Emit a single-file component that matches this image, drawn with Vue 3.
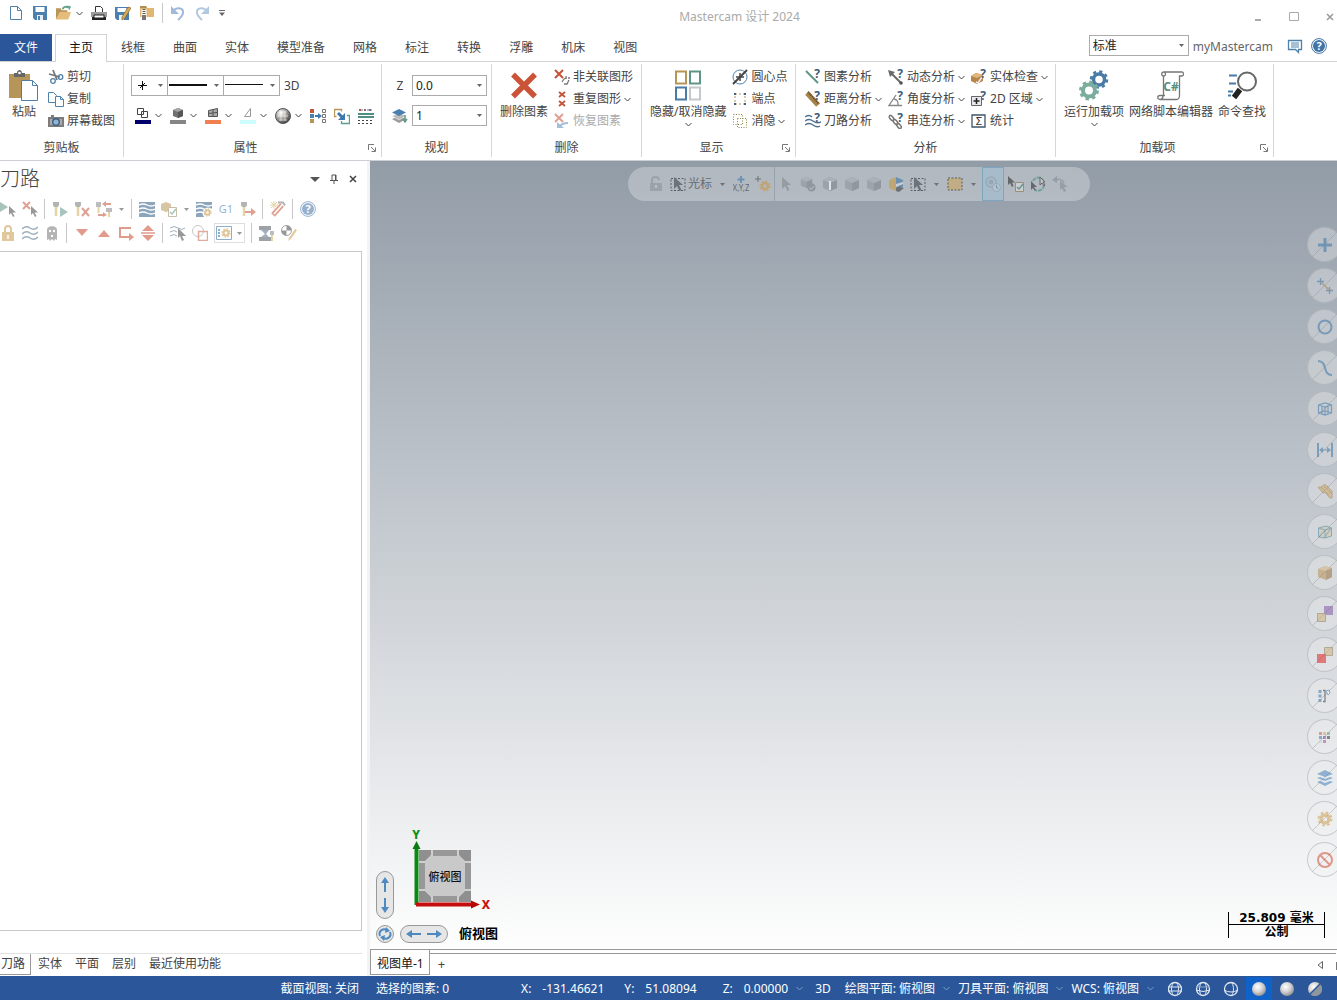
<template>
  <div class="app">
    <svg class="sprite" width="0" height="0" aria-hidden="true">
      <defs>
        <radialGradient id="g-ball" cx=".4" cy=".35" r=".7">
          <stop offset="0" stop-color="#fff" /><stop offset=".5" stop-color="#d4d4d4" /><stop offset="1" stop-color="#8c8c8c" />
        </radialGradient>
        <radialGradient id="g-metal" cx=".35" cy=".3" r=".75">
          <stop offset="0" stop-color="#fff" /><stop offset=".5" stop-color="#a8a4a0" /><stop offset="1" stop-color="#3c3a38" />
        </radialGradient>
      </defs>

      <!-- shared pieces -->
      <symbol id="chev" viewBox="0 0 7 5"><path d="M.5 1l3 3 3-3" fill="none" stroke="currentColor" /></symbol>
      <symbol id="tri" viewBox="0 0 7 5"><path d="M1 1h5L3.500 4z" fill="currentColor" /></symbol>
      <symbol id="launch" viewBox="0 0 8 8"><path d="M.5 6V.5H6M3 3l4 4M7.500 3.500v4h-4" fill="none" stroke="#777" /></symbol>
      <symbol id="cursor" viewBox="0 0 16 16"><path d="M4 1v12l3-3 2.500 5 2-1-2.500-5h4z" fill="#3f444b" /></symbol>

      <!-- quick access -->
      <symbol id="new" viewBox="0 0 16 16"><path d="M2.500 1.500h7l4 4v9h-11zM9.500 1.500v4h4" fill="#fff" stroke="#4e82ab" /></symbol>
      <symbol id="save" viewBox="0 0 16 16"><path d="M1 1h14v14H3l-2-2z" fill="#4a7fb0" /><path d="M3.500 2h9v5h-9z" fill="#fff" /><path d="M5 10h6v5H5z" fill="#e8eef4" /><path d="M6 11h2v4H6z" fill="#4a7fb0" /></symbol>
      <symbol id="open" viewBox="0 0 17 16"><path d="M0 3h5l1 2h6v3H4L0 15z" fill="#b89659" /><path d="M4 7h12l-3 8H0z" fill="#e5bd7b" /><path d="M7 4c1-3 4-3 6-2" fill="none" stroke="#62a28c" stroke-width="2" /><path d="M12 0l4 1-2 4z" fill="#62a28c" /></symbol>
      <symbol id="print" viewBox="0 0 16 16"><path d="M4.500 7V1.500h5l2 2V7" fill="#fff" stroke="#333" /><path d="M0 7h16v5H0z" fill="#9b9b9b" /><path d="M1 12h14v3H1z" fill="#222" /><path d="M3 10h10v3H3z" fill="#fff" stroke="#222" /></symbol>
      <symbol id="saveas" viewBox="0 0 16 16"><path d="M0 2h14v13H2l-2-2z" fill="#4a7fb0" /><path d="M2.500 3h9v4h-9z" fill="#fff" /><path d="M4 10h5v5H4z" fill="#e8eef4" /><path d="M7 12l6-10 3 1-6 10-3 2z" fill="#d8a94f" stroke="#7a5b2d" stroke-width=".6" /></symbol>
      <symbol id="zip" viewBox="0 0 16 16"><path d="M1 1h6l1 2h7v9H1z" fill="#e0b673" /><path d="M1 1h6l1 2H1z" fill="#b08d50" /><path d="M5 4v11" stroke="#fff" stroke-width="5" /><path d="M5 4v11" stroke="#555" stroke-width="3" stroke-dasharray="1 1" /><path d="M3 10h4v5H3z" fill="#777" /></symbol>
      <symbol id="undo" viewBox="0 0 16 16"><path d="M4 5c3-3 8-2 9 1 1 4-2 6-5 9" fill="none" stroke="#9fbbd9" stroke-width="2" /><path d="M1 1v8h8z" fill="#9fbbd9" /></symbol>
      <symbol id="redo" viewBox="0 0 16 16"><path d="M12 5C9 2 4 3 3 6c-1 4 2 6 5 9" fill="none" stroke="#b3c9e0" stroke-width="2" /><path d="M15 1v8H7z" fill="#b3c9e0" /></symbol>
      <symbol id="qat" viewBox="0 0 8 8"><path d="M1 1.500h6" stroke="#666" /><path d="M1 3.500h6L4 7z" fill="#666" /></symbol>
      <symbol id="min" viewBox="0 0 10 10"><path d="M2 8h6" stroke="#aaa" stroke-width="2" /></symbol>
      <symbol id="max" viewBox="0 0 10 10"><path d="M.5.5h9v8h-9z" fill="none" stroke="#aaa" /></symbol>
      <symbol id="close" viewBox="0 0 10 10"><path d="M2 2l6 6M8 2L2 8" stroke="#999" stroke-width="1.500" /></symbol>
      <symbol id="chat" viewBox="0 0 16 16"><path d="M1.500 2.500h13v9h-3v3l-3-3h-7z" fill="#fff" stroke="#4e82ab" stroke-width="1.300" /><path d="M4 5h8M4 7h8M4 9h8" stroke="#4e82ab" /></symbol>
      <symbol id="help" viewBox="0 0 16 16"><circle cx="8" cy="8" r="7.400" fill="#fff" stroke="#4173a6" /><circle cx="8" cy="8" r="6" fill="#4173a6" /></symbol>

      <!-- clipboard -->
      <symbol id="paste" viewBox="0 0 30 33"><path d="M0 5h21v24H0z" fill="#b69559" /><path d="M5 4h3c0-4 5-4 5 0h3v4H5z" fill="#666" /><circle cx="10.500" cy="4" r="1.300" fill="#fff" /><path d="M12.500 11.500h11l5 5v15h-16z" fill="#fff" stroke="#4e7ea6" /><path d="M23.500 11.500v5h5" fill="none" stroke="#4e7ea6" /></symbol>
      <symbol id="cut" viewBox="0 0 16 16"><path d="M5 1l4 10M1 5l11 3" stroke="#777" stroke-width="1.800" /><circle cx="5" cy="12" r="2.300" fill="none" stroke="#4e82ab" stroke-width="1.300" /><circle cx="12.500" cy="8" r="2.300" fill="none" stroke="#4e82ab" stroke-width="1.300" /></symbol>
      <symbol id="copy" viewBox="0 0 16 16"><path d="M.5 1.500h5l3 3v7h-8z" fill="#fff" stroke="#4e82ab" /><path d="M7.500 5.500h5l3 3v7h-8zM12.500 5.500v3h3" fill="#fff" stroke="#4e82ab" /></symbol>
      <symbol id="camera" viewBox="0 0 16 16"><path d="M0 4h3V2h3v2h10v10H0z" fill="#7d7d7d" /><path d="M2 6h12v6H2z" fill="#aaa" /><circle cx="8" cy="9" r="4" fill="#3f5f7c" /><circle cx="8" cy="9" r="2.600" fill="#8db5da" /></symbol>

      <!-- attributes -->
      <symbol id="c-wire" viewBox="0 0 16 18"><path d="M2.500 1.500h6v6h-6zM6.500 4.500h6v6h-6z" fill="none" stroke="#444" /><path d="M0 13h16v4H0z" fill="#00006b" /></symbol>
      <symbol id="c-solid" viewBox="0 0 16 18"><path d="M8 1l5 2v6l-5 2-5-2V3z" fill="#707070" /><path d="M8 1l5 2-5 2-5-2z" fill="#a5a5a5" /><path d="M8 5l5-2v6l-5 2z" fill="#555" /><path d="M0 13h16v4H0z" fill="#858585" /></symbol>
      <symbol id="c-surf" viewBox="0 0 16 18"><path d="M3.500 3.500l9-2v8h-9zM8 2v8M3 6.500l9-1" fill="#aaa" stroke="#555" /><path d="M0 13h16v4H0z" fill="#f08050" /></symbol>
      <symbol id="c-mesh" viewBox="0 0 16 18"><path d="M10.500 1.500v8h-6z" fill="#fff" stroke="#999" /><path d="M0 13h16v4H0z" fill="#cdfcfc" /></symbol>
      <symbol id="metal" viewBox="0 0 16 18"><circle cx="8" cy="9" r="7.500" fill="url(#g-metal)" stroke="#555" /><path d="M5 5h6M3 9h10M4 13h8M6 4v10M10 4v10" stroke="#fff" opacity=".6" /></symbol>
      <symbol id="attr" viewBox="0 0 16 18"><path d="M0 2h4v4H0z" fill="#c5533a" /><path d="M0 7h4v4H0z" fill="#4a7fb0" /><path d="M0 12h4v4H0z" fill="#b69559" /><path d="M5 9h4" stroke="#3f78ad" stroke-width="2" /><path d="M8 6l4 3-4 3z" fill="#3f78ad" /><path d="M12.500 2.500h3v3h-3zM12.500 7.500h3v3h-3zM12.500 12.500h3v3h-3z" fill="none" stroke="#777" /></symbol>
      <symbol id="attr2" viewBox="0 0 16 18"><path d="M2.500 9.500h-2v-7h7v2" fill="none" stroke="#b69559" stroke-width="1.300" /><path d="M4 6l4 4" stroke="#3f78ad" stroke-width="3" /><path d="M11 6v7H4z" fill="#3f78ad" /><path d="M13 8.500h2.500v8h-8V14" fill="none" stroke="#5d9c93" stroke-width="1.300" /></symbol>
      <symbol id="lines" viewBox="0 0 16 18"><path d="M1 3h14" stroke="#c5533a" stroke-width="2" stroke-dasharray="2 3" /><path d="M3 3h12" stroke="#4a7fb0" stroke-dasharray="2 1" /><path d="M0 7h16M0 10h16" stroke="#4f8f86" stroke-width="2" /><path d="M0 13.500h16M0 16.500h16" stroke="#444" stroke-dasharray="2 2" /></symbol>
      <symbol id="layers" viewBox="0 0 16 16"><path d="M0 11l7-3 7 3-7 4z" fill="#999" /><path d="M0 8l7-3 7 3-7 4z" fill="#bbb" stroke="#fff" stroke-width=".5" /><path d="M0 4.500L7 1l7 3.500L7 8z" fill="#4a7fb0" /><path d="M13 7v6M11 11l2 3 2-3" fill="none" stroke="#5d9c83" stroke-width="1.500" /></symbol>

      <!-- delete -->
      <symbol id="del" viewBox="0 0 30 32"><path d="M4 5l22 22M26 5L4 27" stroke="#ca5338" stroke-width="5.500" /></symbol>
      <symbol id="del1" viewBox="0 0 16 16"><path d="M1 1l8 8M9 1L1 9" stroke="#c5533a" stroke-width="2" /><path d="M8 13l2-3 3-1M10 15l3 0 2-4M12 7v2M14 9h2" fill="none" stroke="#777" stroke-width="1.300" /></symbol>
      <symbol id="del2" viewBox="0 0 16 16"><path d="M5 1l6 5M11 1L5 6M5 10l6 5M11 10l-6 5" stroke="#c5533a" stroke-width="1.800" /></symbol>
      <symbol id="del3" viewBox="0 0 16 16"><path d="M1 1l8 8M9 1L1 9" stroke="#dfa093" stroke-width="2" /><path d="M14 10c-3 0-6 0-8 3" fill="none" stroke="#a3bfdb" stroke-width="2" /><path d="M3 9v6h7z" fill="#a3bfdb" /></symbol>

      <!-- display -->
      <symbol id="hide" viewBox="0 0 30 32"><g fill="#fff" stroke-width="2"><path d="M3 2h10v12H3z" stroke="#b69559" /><path d="M17 2h10v12H17z" stroke="#5f9585" /><path d="M3 18h10v12H3z" stroke="#4a7ba6" /><path d="M17 18h10v12H17z" stroke="#c5c8cb" /></g></symbol>
      <symbol id="center" viewBox="0 0 16 16"><circle cx="8" cy="8" r="7" fill="none" stroke="#4e82ab" /><path d="M8 4v8M4 8h8" stroke="#444" stroke-width="1.500" /><path d="M1 15L15 1" stroke="#444" stroke-width="2" /></symbol>
      <symbol id="ends" viewBox="0 0 16 16"><path d="M3 3h10v10H3z" fill="none" stroke="#b69559" stroke-dasharray="2 2" /><path d="M2 2h2v2H2zM12 2h2v2h-2zM2 12h2v2H2zM12 12h2v2h-2z" fill="#3f5f8c" /></symbol>
      <symbol id="blank" viewBox="0 0 16 16"><path d="M1.500 1.500h9v10h-9zM5.500 5.500h9v9h-9z" fill="none" stroke="#8d8748" stroke-dasharray="1 1.500" /></symbol>

      <!-- analyze -->
      <symbol id="an1" viewBox="0 0 16 16"><path d="M1 2l12 12" stroke="#5f9585" stroke-width="2" /></symbol>
      <symbol id="an2" viewBox="0 0 16 16"><path d="M2 2l11 12" stroke="#a8834a" stroke-width="5" /><path d="M3 1l11 12" stroke="#5b4526" stroke-dasharray="1 1" stroke-width="2" /></symbol>
      <symbol id="an3" viewBox="0 0 16 16"><path d="M0 4q4-3 7 0M0 8q4-3 8 0t8 1M0 12q4-3 8 0t7 1" fill="none" stroke="#4e6f8f" stroke-width="1.400" /></symbol>
      <symbol id="an4" viewBox="0 0 16 16"><path d="M3 4l10 10" stroke="#6a6a6a" stroke-width="2" /><path d="M0 1l7 2-5 5z" fill="#6a6a6a" /><circle cx="13" cy="14" r="1.800" fill="#555" /></symbol>
      <symbol id="an5" viewBox="0 0 16 16"><path d="M8 4L1 14.500h13M6 8c4 1 4 3 4 6" fill="none" stroke="#888" stroke-width="1.300" /></symbol>
      <symbol id="an6" viewBox="0 0 16 16"><g fill="none" stroke="#777" stroke-width="1.500"><ellipse cx="3.500" cy="5" rx="3" ry="1.600" transform="rotate(50 3.500 5)" /><ellipse cx="7.500" cy="9" rx="3" ry="1.600" transform="rotate(50 7.500 9)" /><ellipse cx="11" cy="13" rx="3" ry="1.600" transform="rotate(50 11 13)" /></g></symbol>
      <symbol id="an7" viewBox="0 0 16 16"><path d="M0 7l5-3 7 2v6l-6 3-6-3z" fill="#b8854a" /><path d="M0 7l5-3 7 2-6 3z" fill="#dfb67c" /><path d="M5 13l2 1 4-6" fill="none" stroke="#eee" stroke-width="1.500" /></symbol>
      <symbol id="an8" viewBox="0 0 16 16"><path d="M.5 5.500h10v9H.5z" fill="#e8e8ee" stroke="#666" /><path d="M5.500 7v6M2.500 10h6" stroke="#222" stroke-width="1.500" /></symbol>
      <symbol id="an9" viewBox="0 0 16 16"><path d="M1 2h13v12H1z" fill="#fff" stroke="#3f5468" stroke-width="1.300" /></symbol>

      <!-- add-ins -->
      <symbol id="gears" viewBox="0 0 30 32"><circle cx="20" cy="10" r="5.500" fill="none" stroke="#4a7ba6" stroke-width="3.500" /><circle cx="20" cy="10" r="8" fill="none" stroke="#4a7ba6" stroke-width="2.500" stroke-dasharray="3.140 3.140" /><circle cx="10" cy="21" r="6" fill="#fff" stroke="#7bad9f" stroke-width="4" /><circle cx="10" cy="21" r="8.500" fill="none" stroke="#7bad9f" stroke-width="3" stroke-dasharray="3.340 3.340" /></symbol>
      <symbol id="csharp" viewBox="0 0 30 32"><path d="M8 2.500h18c2 0 2 4 0 4h-2.500V26c0 4-3 4-3 4H4c-3 0-3-4 0-4h3.500V6.500C5 6.500 5 2.500 8 2.500c2 0 2 4 0 4M4 30c3 0 3-4 3-4h2" fill="none" stroke="#777" stroke-width="1.300" /></symbol>
      <symbol id="find" viewBox="0 0 30 32"><circle cx="20" cy="12" r="9" fill="#fff" stroke="#666" stroke-width="2" /><path d="M13 20l-6 8" stroke="#222" stroke-width="5.500" /><path d="M2 6h8M2 14h7M1 22h5M1 26h3" stroke="#4a7ba6" stroke-width="2" /></symbol>

      <!-- panel -->
      <symbol id="pin" viewBox="0 0 10 10"><path d="M3 1h4v5M3 1v5M1 6.500h8M5 6v4M6.500 1v5" fill="none" stroke="#555" /></symbol>
      <symbol id="p-close" viewBox="0 0 10 10"><path d="M2 2l6 6M8 2L2 8" stroke="#444" stroke-width="1.500" /></symbol>
      <symbol id="p-down" viewBox="0 0 10 10"><path d="M0 3h10L5 8z" fill="#555" /></symbol>
      <symbol id="p1" viewBox="0 0 16 16"><path d="M0 1l8 5-8 5z" fill="#5f9585" /><path d="M9 5v9l2-2 2 4 1.500-1-2-3.500H16z" fill="#444" /></symbol>
      <symbol id="p2" viewBox="0 0 16 16"><path d="M1 1l7 7M8 1L1 8" stroke="#c5533a" stroke-width="2" /><path d="M9 5v9l2-2 2 4 1.500-1-2-3.500H16z" fill="#444" /></symbol>
      <symbol id="tool" viewBox="0 0 16 16"><path d="M1 1h6v3l-1 2H2L1 4z" fill="#777" /><path d="M4 6v9" stroke="#d1b25c" stroke-width="2.500" /></symbol>
      <symbol id="p3" viewBox="0 0 16 16"><use href="#tool" /><path d="M8 6l8 5-8 5z" fill="#5f9585" /></symbol>
      <symbol id="p4" viewBox="0 0 16 16"><use href="#tool" /><path d="M8 7l7 8M15 7l-7 8" stroke="#c5533a" stroke-width="2" /></symbol>
      <symbol id="p5" viewBox="0 0 16 16"><path d="M0 1h5v5H0zM10 7h6v4h-6z" fill="#888" /><path d="M2.500 6v6M13 11v5" stroke="#d1b25c" stroke-width="2" /><path d="M15 3H8M2 14h6" stroke="#c5533a" stroke-width="2" /><path d="M6 3l4-3v6zM11 14l-4-3v5z" fill="#c5533a" /></symbol>
      <symbol id="p6" viewBox="0 0 16 16"><path d="M0 1h16v15H0z" fill="#2f5d84" /><path d="M0 4q4-2 8 0t8 0M0 8q4-2 8 0t8 0M0 12q4-2 8 0t8 0" fill="none" stroke="#fff" stroke-width="1.300" /></symbol>
      <symbol id="p7" viewBox="0 0 16 16"><path d="M0 3l5-2 5 2v6l-5 2-5-2z" fill="#b89659" /><path d="M7.500 6.500h8v9h-8z" fill="#fff" stroke="#9a8a5a" /><path d="M9 11l2 2 4-5" fill="none" stroke="#5f9585" stroke-width="1.500" /></symbol>
      <symbol id="gear" viewBox="0 0 16 16"><circle cx="8" cy="8" r="4" fill="none" stroke="#c89746" stroke-width="3.500" /><circle cx="8" cy="8" r="6.500" fill="none" stroke="#c89746" stroke-width="2" stroke-dasharray="2.550 2.550" /></symbol>
      <symbol id="p8" viewBox="0 0 16 16"><use href="#p6" /><circle cx="12" cy="12" r="5.500" fill="#fff" /><use href="#gear" x="7" y="7" width="9" height="9" /></symbol>
      <symbol id="p10" viewBox="0 0 16 16"><use href="#tool" /><path d="M5 11h7" stroke="#c5533a" stroke-width="2" /><path d="M11 7l5 4-5 4z" fill="#c5533a" /></symbol>
      <symbol id="p11" viewBox="0 0 16 16"><path d="M3 14l9-10" stroke="#c5533a" stroke-width="5" /><path d="M4 13l8-9" stroke="#fff" stroke-width="1.500" /><path d="M4 0v8M0 4h8M1 1l6 6M7 1L1 7" stroke="#d1b25c" /><path d="M8 1.500h5l2 3" fill="none" stroke="#777" stroke-width="2" /></symbol>
      <symbol id="r1" viewBox="0 0 16 16"><path d="M2 7h12v9H2z" fill="#c89b4e" /><path d="M5 8V4c0-4 6-4 6 0v4" fill="none" stroke="#c89b4e" stroke-width="2" /><path d="M8 10v4" stroke="#fff" stroke-width="1.500" /></symbol>
      <symbol id="r2" viewBox="0 0 16 16"><path d="M0 4q4-4 8-1t8-1M0 9q4-4 8-1t8-1M0 14q4-4 8-1t8-1" fill="none" stroke="#4e6f8f" stroke-width="1.500" /></symbol>
      <symbol id="r3" viewBox="0 0 16 16"><path d="M3 15V5c0-5 10-5 10 0v10l-2-1-1 2-2-2-2 2-1-2z" fill="#777" /><circle cx="6" cy="6" r="1.200" fill="#fff" /><circle cx="10" cy="6" r="1.200" fill="#fff" /><path d="M7 10h2v2H7z" fill="#fff" /></symbol>
      <symbol id="r4" viewBox="0 0 16 16"><path d="M2 4h12l-6 7z" fill="#ca4a30" /></symbol>
      <symbol id="r5" viewBox="0 0 16 16"><path d="M2 12h12L8 5z" fill="#ca4a30" /></symbol>
      <symbol id="r6" viewBox="0 0 16 16"><path d="M13 3H2v9h10" fill="none" stroke="#ca4a30" stroke-width="2" /><path d="M11 8l5 4-5 4z" fill="#ca4a30" /></symbol>
      <symbol id="r7" viewBox="0 0 16 16"><path d="M2 6h12L8 0zM2 10h12l-6 6z" fill="#ca4a30" /><path d="M1 8h14" stroke="#ca4a30" stroke-width="1.500" /></symbol>
      <symbol id="r8" viewBox="0 0 16 16"><path d="M0 3q4-3 8 0t7 0M0 7q4-3 7 0M0 11q4-3 7 0" fill="none" stroke="#4e6f8f" /><path d="M8 3v10l2-2 2 5 2-1-2-4h4z" fill="#444" /></symbol>
      <symbol id="r9" viewBox="0 0 16 16"><circle cx="6" cy="6" r="5.500" fill="none" stroke="#999" /><path d="M6.500 6.500h9v9h-9z" fill="none" stroke="#ca6a50" stroke-width="1.500" /></symbol>
      <symbol id="r10" viewBox="0 0 16 16"><path d="M.5 1.500h15v13H.5z" fill="#fff" stroke="#2f6ea5" /><path d="M3 4v2M3 7v2M3 10v2" stroke="#2f6ea5" stroke-width="2" /><use href="#gear" x="5" y="3" width="10" height="10" /></symbol>
      <symbol id="r11" viewBox="0 0 16 16"><path d="M0 1h12v4H0zM0 12h12v4H0z" fill="#4f565d" /><path d="M2 5l4 4-4 3h8L7 9l3-4z" fill="#54718e" /><path d="M11 6h4v4h-4z" fill="#888" /><path d="M13 10v6" stroke="#d1b25c" stroke-width="2" /></symbol>
      <symbol id="r12" viewBox="0 0 16 16"><circle cx="5.500" cy="5.500" r="5" fill="#fff" stroke="#555" /><path d="M5.500.5v10a5 5 0 0 1-5-5h10a5 5 0 0 0-5-5z" fill="#444" /><path d="M8 13l6-9 2 1-6 9-3 2z" fill="#cfa14e" /></symbol>

      <!-- selection bar -->
      <symbol id="s-lock" viewBox="0 0 16 16"><path d="M2 7h12v8H2z" fill="#8d949b" /><path d="M4 7V4c0-4 7-4 7 0" fill="none" stroke="#8d949b" stroke-width="2" /><path d="M8 9v3" stroke="#c4c9cf" stroke-width="2" /></symbol>
      <symbol id="s-sel" viewBox="0 0 16 16"><path d="M1 2.500h14v12H1z" fill="none" stroke="#222" stroke-dasharray="2 1.500" /><use href="#cursor" /></symbol>
      <symbol id="s-xyz" viewBox="0 0 16 16"><path d="M8 0v7M4.500 3.500h7" stroke="#3f78ad" stroke-width="2" /></symbol>
      <symbol id="s-gear" viewBox="0 0 16 16"><path d="M3 0v6M0 3h6" stroke="#444" /><use href="#gear" x="4" y="4" width="12" height="12" /></symbol>
      <symbol id="s-arrow" viewBox="0 0 16 16"><path d="M4 1v12l3-3 2.500 5 2-1-2.500-5h4z" fill="#82898f" /></symbol>
      <symbol id="s-cube" viewBox="0 0 16 16"><path d="M8 1l7 3v8l-7 3-7-3V4z" fill="#8f969d" /><path d="M8 7l7-3v8l-7 3z" fill="#7b8289" /><path d="M8 1l7 3-7 3-7-3z" fill="#a6acb2" /></symbol>
      <symbol id="s-cubecheck" viewBox="0 0 16 16"><use href="#s-cube" width="13" height="13" /><circle cx="11.500" cy="11.500" r="4" fill="#7b8289" /><path d="M9.500 11.500l1.500 2 3-3.500" fill="none" stroke="#c4c9cf" /></symbol>
      <symbol id="s-cubebar" viewBox="0 0 16 16"><use href="#s-cube" /><path d="M8 5v9" stroke="#fff" stroke-width="2" /></symbol>
      <symbol id="s-cubecolor" viewBox="0 0 16 16"><path d="M8 1v14l-7-3V4z" fill="#c99a3e" /><path d="M8 1l7 3v8l-7 3z" fill="#3d75a8" /><path d="M8 8l7-2v2l-7 3z" fill="#ddd" /><path d="M8 12l5-2v2h3l-5 4-3-1z" fill="#444" /></symbol>
      <symbol id="s-area" viewBox="0 0 16 16"><path d="M1 2h14v12H1z" fill="#caa65c" stroke="#222" stroke-dasharray="2 1.500" /></symbol>
      <symbol id="s-clock" viewBox="0 0 16 16"><circle cx="6" cy="6" r="5" fill="none" stroke="#8e9eaa" stroke-width="1.500" /><circle cx="6" cy="6" r="2.500" fill="#8e9eaa" /><circle cx="11.500" cy="11.500" r="4" fill="#b8cbd6" stroke="#8e9eaa" /><path d="M11.500 9v3h2" fill="none" stroke="#687884" /></symbol>
      <symbol id="s-task" viewBox="0 0 16 16"><path d="M0 0v9l2-2 2 4 1.500-1L4 6.500h3z" fill="#333" /><path d="M7.500 6.500h8v9h-8z" fill="#ddd" stroke="#8a7441" /><path d="M9 11l2 2 4-5" fill="none" stroke="#387a6b" stroke-width="1.500" /></symbol>
      <symbol id="s-cycle" viewBox="0 0 16 16"><path d="M3 5c3-5 8-4 10-1M14 9c0 5-6 7-9 5" fill="none" stroke="#4f8f86" stroke-width="2" stroke-dasharray="4 1" /><path d="M1 5v9l2-2 2 3 1-1-2-3h3z" fill="#333" /><path d="M10 1v8l2-2 2 3 1-1-2-3h2z" fill="#ccc" stroke="#333" /></symbol>
      <symbol id="s-back" viewBox="0 0 16 16"><path d="M2 4c5-2 9 0 10 3" fill="none" stroke="#858c93" stroke-width="1.500" /><path d="M0 4l5-4v7z" fill="#858c93" /><path d="M8 5v9l2-2 2 4 2-1-2-4h4z" fill="#858c93" /></symbol>

      <!-- quick masks -->
      <symbol id="m-slash" viewBox="0 0 35 35"><path d="M5.500 29.500l24-24" stroke="#7f8890" /></symbol>
      <symbol id="m1" viewBox="0 0 16 16"><path d="M8 1v14M1 8h14" stroke="#2f6ea5" stroke-width="3" /></symbol>
      <symbol id="m2" viewBox="0 0 16 16"><path d="M3.500 0v7M0 3.500h7M12.500 9v7M9 12.500h7" stroke="#2f6ea5" stroke-width="1.300" /><path d="M4 4l8 8" stroke="#a07f3d" stroke-width="1.500" /></symbol>
      <symbol id="m3" viewBox="0 0 16 16"><circle cx="8" cy="8" r="6.500" fill="none" stroke="#2f6ea5" stroke-width="2" /></symbol>
      <symbol id="m4" viewBox="0 0 16 16"><path d="M1 1c10 0 4 14 14 14" fill="none" stroke="#2f6ea5" stroke-width="2" /></symbol>
      <symbol id="m5" viewBox="0 0 16 16"><path d="M1.500 4L8 2l6.500 2v8L8 14l-6.500-2zM1.500 4L8 6l6.500-2M8 6v8M1.500 12L8 10l6.500 2M5 5v8M11 5v8" fill="none" stroke="#2f6ea5" stroke-width="1.200" /></symbol>
      <symbol id="m6" viewBox="0 0 16 16"><path d="M1 1v14M15 1v14" stroke="#2f6ea5" stroke-width="2" /><path d="M3 8h10" stroke="#2f6ea5" /><path d="M2 8l4-3v6zM14 8l-4-3v6z" fill="#2f6ea5" /></symbol>
      <symbol id="m7" viewBox="0 0 16 16"><path d="M1 4c4 2 5-5 9-1l5 5v7c-5 1-4-7-9-5z" fill="#d0a55e" stroke="#9c7534" /><path d="M4 4l8 8M7 3l8 8" stroke="#9c7534" /></symbol>
      <symbol id="m8" viewBox="0 0 16 16"><path d="M1.500 4L9 2l5.500 2v8L8 14l-6.500-1z" fill="#cfc6a6" stroke="#3f7a9c" /><path d="M1.500 4L8 6l6.500-2M8 6v8M8 6l-6 7M8 13l6-9" fill="none" stroke="#3f7a9c" /></symbol>
      <symbol id="m9" viewBox="0 0 16 16"><path d="M1 4l7-3 7 2v9l-6 3-8-3z" fill="#b68a4a" /><path d="M1 4l7-3 7 2-6 3z" fill="#d4b07a" /><path d="M9 6l6-3v9l-6 3z" fill="#8f6830" /></symbol>
      <symbol id="m10" viewBox="0 0 16 16"><path d="M7 0h9v9H7z" fill="#7a4fa5" /><path d="M.5 7.500h8v8h-8z" fill="#d0ae72" stroke="#86734e" /></symbol>
      <symbol id="m11" viewBox="0 0 16 16"><path d="M7.500.5h8v8h-8z" fill="#d0ae72" stroke="#86734e" /><path d="M0 7h9v9H0z" fill="#e01010" /></symbol>
      <symbol id="m12" viewBox="0 0 16 16"><path d="M3 2v12" stroke="#2f6ea5" stroke-width="3" stroke-dasharray="3 1.500" /><path d="M6 2.500h2v11H6" fill="none" stroke="#222" stroke-width="1.300" /><path d="M9 3l3-1 1 3-2 2z" fill="#fff" stroke="#2f6ea5" /></symbol>
      <symbol id="m13" viewBox="0 0 16 16"><path d="M2 3h3v3H2z" fill="#c5533a" /><path d="M6 3h3v3H6z" fill="#d1a24c" /><path d="M10 3h3v3h-3z" fill="#5f9585" /><path d="M2 7h3v3H2z" fill="#2f6ea5" /><path d="M6 7h3v3H6z" fill="#6a3d8f" /><path d="M10 7h3v3h-3z" fill="#222" /><path d="M2 11h3v3H2z" fill="#ccc" /><path d="M6 11h3v3H6z" fill="#9f3f9c" /></symbol>
      <symbol id="m14" viewBox="0 0 16 16"><path d="M0 4l8-4 8 4-8 3zM0 8l3-1 5 2 5-2 3 1-8 3zM0 12l3-1 5 2 5-2 3 1-8 4z" fill="#3676b8" /></symbol>
      <symbol id="m16" viewBox="0 0 16 16"><circle cx="8" cy="8" r="7" fill="none" stroke="#cf4028" stroke-width="2" /><path d="M3 3l10 10" stroke="#cf4028" stroke-width="2" /></symbol>

      <!-- view manipulators and shading modes -->
      <symbol id="v-rot" viewBox="0 0 16 16"><path d="M3 10C1 5 6 2 10 4M13 6c2 5-3 8-7 6" fill="none" stroke="#4e8ac0" stroke-width="2" /><path d="M9 1l4 4-5 2zM7 15l-4-4 5-2z" fill="#4e8ac0" /></symbol>
      <symbol id="v-h" viewBox="0 0 46 16"><path d="M9 8h11M26 8h11" stroke="#4e8ac0" stroke-width="2" /><path d="M5 8l6-4v8zM41 8l-6-4v8z" fill="#4e8ac0" /></symbol>
      <symbol id="v-v" viewBox="0 0 16 46"><path d="M8 9v11M8 26v11" stroke="#4e8ac0" stroke-width="2" /><path d="M8 5l4 6H4zM8 41l4-6H4z" fill="#4e8ac0" /></symbol>
      <symbol id="globe" viewBox="0 0 16 16"><circle cx="8" cy="8" r="6.500" fill="none" stroke="#dfe8f3" stroke-width="1.300" /><path d="M1 6h14M1 10h14M6 2c-2 4-2 8 0 12M10 2c2 4 2 8 0 12" fill="none" stroke="#dfe8f3" /></symbol>
      <symbol id="globe2" viewBox="0 0 16 16"><circle cx="8" cy="8" r="6.500" fill="none" stroke="#dfe8f3" stroke-width="1.300" /><path d="M1 9q7 3 14 0M6 2c-2 4-2 8 0 12M10 2c2 4 2 8 0 12" fill="none" stroke="#dfe8f3" /><path d="M1 6h14" stroke="#8fa8cc" /></symbol>
      <symbol id="globe3" viewBox="0 0 16 16"><circle cx="8" cy="8" r="6.500" fill="none" stroke="#dfe8f3" stroke-width="1.300" /><path d="M1 9q7 4 14 0M9 2c2 4 2 8 0 12" fill="none" stroke="#dfe8f3" /></symbol>
      <symbol id="ball" viewBox="0 0 16 16"><circle cx="8" cy="8" r="7" fill="url(#g-ball)" /></symbol>
      <symbol id="ball2" viewBox="0 0 16 16"><circle cx="8" cy="8" r="7" fill="url(#g-ball)" /><path d="M13 3A7 7 0 0 1 3 13z" fill="#8f969e" /><path d="M2 14L14 2" stroke="#2b579a" stroke-width="1.500" /></symbol>
    </svg>

    <header class="titlebar">
      <div class="quick">
        <template v-for="(q, i) in quick" :key="i">
          <i v-if="q === '|'" class="sep"></i>
          <button v-else class="ib" :class="q" :aria-label="q">
            <Icon :class="sizes[q] || 'i16'" :name="q" />
          </button>
        </template>
      </div>
      <h1>Mastercam 设计 2024</h1>
      <div class="winbtns">
        <button v-for="w in ['min', 'max', 'close']" :key="w" class="ib" :aria-label="w"><Icon class="i10" :name="w" /></button>
      </div>
    </header>

    <nav class="tabs">
      <button class="file">文件</button>
      <button v-for="t in tabs" :key="t" class="tab" :class="{ on: t === tab }" @click="tab = t">{{ t }}</button>
      <div class="tabs-right">
        <span class="combo style-combo">
          <select v-model="style" aria-label="样式"><option>标准</option></select>
          <Icon class="i7" name="tri" />
        </span>
        <a href="#" class="my">myMastercam</a>
        <button class="ib" aria-label="chat"><Icon class="i16" name="chat" /></button>
        <button class="ib" aria-label="help"><Icon class="i16" name="help" /></button>
      </div>
    </nav>

    <section class="ribbon">
      <div class="group g-clip">
        <div class="body">
          <button class="big"><Icon class="i-big" name="paste" />粘贴</button>
          <div class="col">
            <button v-for="b in clip" :key="b.t" class="small"><Icon class="i16" :name="b.i" />{{ b.t }}</button>
          </div>
        </div>
        <footer>剪贴板</footer>
      </div>

      <div class="group g-attr has-launcher">
        <div class="body attr">
          <div class="line">
            <span class="combo c-point">
              <select aria-label="点样式"><option aria-label="星形"></option></select>
              <svg class="over" viewBox="0 0 10 10"><path d="M5.500 1v9M1 5.500h9M3 8l5-5" stroke="#111" fill="none" /></svg>
              <Icon class="i7" name="tri" />
            </span>
            <span class="combo c-line">
              <select aria-label="线型"><option aria-label="实线"></option></select>
              <svg class="over wide" viewBox="0 0 38 10"><path d="M0 5h38" stroke="#111" stroke-width="2" /></svg>
              <Icon class="i7" name="tri" />
            </span>
            <span class="combo c-line">
              <select aria-label="线宽"><option aria-label="细线"></option></select>
              <svg class="over wide" viewBox="0 0 38 10"><path d="M0 4.500h38" stroke="#111" /></svg>
              <Icon class="i7" name="tri" />
            </span>
            <button class="ib threed">3D</button>
          </div>
          <div class="line swatches">
            <button v-for="c in colors" :key="c" class="ib sw" :aria-label="c">
              <Icon class="i18" :name="c" /><Icon class="i7" name="chev" />
            </button>
            <button v-for="c in ['attr', 'attr2', 'lines']" :key="c" class="ib" :aria-label="c"><Icon class="i18" :name="c" /></button>
          </div>
        </div>
        <footer>属性</footer>
        <button class="ib launcher" aria-label="属性选项"><Icon class="i8" name="launch" /></button>
      </div>

      <div class="group g-plan">
        <div class="body attr">
          <div class="line">
            <label for="z">Z</label>
            <span class="combo c-num"><select id="z"><option>0.0</option></select><Icon class="i7" name="tri" /></span>
          </div>
          <div class="line">
            <label for="level" aria-label="层别"><Icon class="i16" name="layers" /></label>
            <span class="combo c-num"><select id="level"><option>1</option></select><Icon class="i7" name="tri" /></span>
          </div>
        </div>
        <footer>规划</footer>
      </div>

      <div v-for="g in groups" :key="g.name" class="group" :class="[g.cls, { 'has-launcher': g.launcher }]">
        <div class="body">
          <button v-for="b in g.big" :key="b.t" class="big">
            <Icon class="i-big" :name="b.i" />{{ b.t }}
            <Icon v-if="b.c" class="i7" name="chev" />
          </button>
          <div v-for="(col, n) in g.cols" :key="n" class="col">
            <button v-for="b in col" :key="b.t" class="small" :disabled="b.off">
              <Icon class="i16" :name="b.i" />{{ b.t }}<Icon v-if="b.c" class="i7" name="chev" />
            </button>
          </div>
        </div>
        <footer>{{ g.name }}</footer>
        <button v-if="g.launcher" class="ib launcher" :aria-label="g.name + '选项'"><Icon class="i8" name="launch" /></button>
      </div>
    </section>

    <main class="work">
      <aside class="panel">
        <div class="panel-head">
          <h2>刀路</h2>
          <button v-for="p in ['p-down', 'pin', 'p-close']" :key="p" class="ib" :aria-label="p"><Icon class="i10" :name="p" /></button>
        </div>
        <div v-for="(row, n) in panelRows" :key="n" class="panel-tools">
          <template v-for="(p, i) in row" :key="i">
            <i v-if="p === '|'" class="sep"></i>
            <button v-else-if="p === 'r10'" class="ib boxed" :aria-label="p">
              <Icon class="i16" name="r10" /><Icon class="i7" name="tri" />
            </button>
            <button v-else class="ib" :aria-label="p"><Icon :class="sizes[p] || 'i16'" :name="p" /></button>
          </template>
        </div>
        <div class="tree"></div>
        <div class="panel-tabs">
          <button v-for="t in panelTabs" :key="t" :class="{ on: t === panelTab }" @click="panelTab = t">{{ t }}</button>
        </div>
      </aside>

      <section class="view">
        <div class="canvas">
          <div class="selbar">
            <template v-for="(s, i) in selbar" :key="i">
              <i v-if="s === '|'" class="bar-sep"></i>
              <button v-else-if="s === 's-sel-text'" class="ib pick"><Icon class="i16" name="s-sel" />光标</button>
              <button v-else class="ib" :class="{ active: s === 's-clock', drop: s === 'tri' }" :aria-label="s">
                <Icon :class="sizes[s] || 'i16'" :name="s" />
              </button>
            </template>
          </div>

          <div class="masks">
            <button v-for="m in masks" :key="m" class="mask" :aria-label="m">
              <Icon class="slash" name="m-slash" />
              <Icon class="i16" :name="m" />
            </button>
          </div>

          <div class="gnomon">
            <div class="gnomon-top">
              <button class="pill tall" aria-label="上下旋转"><Icon name="v-v" /></button>
              <svg class="cube" viewBox="0 0 90 94">
                <path d="M12 25h52v52H12z" fill="#cfcfcf" />
                <path d="M12 25h12v5l-6 6h-6zM52 25h12v11h-6l-6-6zM12 66h6l6 6v5H12zM58 66h6v11H52v-5z" fill="#8f8f8f" />
                <path d="M26 25h24v6H26zM26 71h24v6H26zM12 38h6v26h-6zM58 38h6v26h-6z" fill="#989898" />
                <path d="M24 31h28l6 7v26l-6 7H24l-6-7V38z" fill="#c9c9c9" />
                <text x="38" y="56" font-size="11" font-weight="500" fill="#111" text-anchor="middle">俯视图</text>
                <path d="M9.500 80V23" stroke="#0a8a12" stroke-width="4" />
                <path d="M5.500 24l4-8 4 8z" fill="#0a7a12" />
                <path d="M9 79.500h56" stroke="#c40d0d" stroke-width="4" />
                <path d="M64 75.500l9 4-9 4z" fill="#b40808" />
                <text x="9" y="14" font-size="12" font-weight="800" fill="#0a9018" text-anchor="middle">Y</text>
                <text x="79" y="84" font-size="12" font-weight="800" fill="#cc1010" text-anchor="middle">X</text>
              </svg>
            </div>
            <div class="gnomon-bottom">
              <button class="pill round" aria-label="旋转"><Icon name="v-rot" /></button>
              <button class="pill long" aria-label="左右旋转"><Icon name="v-h" /></button>
              <strong>俯视图</strong>
            </div>
          </div>

          <div class="scale">
            <span>25.809 毫米</span>
            <span>公制</span>
          </div>
        </div>
        <div class="sheets">
          <button class="sheet">视图单-1</button>
          <button class="plus" aria-label="新建视图单">+</button>
          <button class="ib prev" aria-label="上一个"><svg class="i8" viewBox="0 0 8 8"><path d="M6.500.5v7L2 4z" fill="none" stroke="#666" /></svg></button>
          <i class="stub"></i>
        </div>
      </section>
    </main>

    <footer class="status">
      <span>截面视图: 关闭</span>
      <span class="picked">选择的图素: 0</span>
      <span class="coord">X:<b>-131.46621</b></span>
      <span class="coord y">Y:<b>51.08094</b></span>
      <span class="coord z">Z:<b>0.00000</b></span>
      <Icon class="i7" name="chev" />
      <button class="mode">3D</button>
      <template v-for="p in planes" :key="p">
        <button>{{ p }}</button>
        <Icon class="i7" name="chev" />
      </template>
      <div class="shades">
        <button v-for="(s, i) in shades" :key="i" :class="{ on: i === 3 }" :aria-label="'着色 ' + (i + 1)"><Icon class="i16" :name="s" /></button>
      </div>
    </footer>
  </div>
</template>

<script setup>
import { h, ref } from 'vue'

// characters that sit on top of an icon: text, x, y, size, weight, colour
const q = ['?', 12, 9, 12, 700, '#3d5d7b']
const marks = {
  an1: q,
  an2: q,
  an3: q,
  an4: q,
  an5: q,
  an6: q,
  an7: q,
  an8: q,
  an9: ['Σ', 8, 12, 11, 400, '#333'],
  help: ['?', 8, 12, 11, 700, '#fff'],
  csharp: ['C#', 15, 22, 12, 700, '#5a8f7c'],
  p9: ['G1', 8, 12, 11, 400, '#3f78ad'],
  's-xyz': ['X,Y,Z', 8, 15, 8, 400, '#333'],
}

const Icon = ({ name }) => {
  const m = marks[name]
  return h('svg', { 'aria-hidden': 'true' }, [
    h('use', { href: '#' + name }),
    m && h('text', { x: m[1], y: m[2], 'font-size': m[3], 'font-weight': m[4], fill: m[5], 'text-anchor': 'middle' }, m[0]),
  ])
}
Icon.props = ['name']

const sizes = { chev: 'i7', tri: 'i7', qat: 'i8' }

const tab = ref('主页')
const style = ref('标准')
const panelTab = ref('刀路')

const quick = ['new', 'save', 'open', 'chev', 'print', 'saveas', 'zip', '|', 'undo', 'redo', 'qat']
const tabs = ['主页', '线框', '曲面', '实体', '模型准备', '网格', '标注', '转换', '浮雕', '机床', '视图']

const clip = [
  { i: 'cut', t: '剪切' },
  { i: 'copy', t: '复制' },
  { i: 'camera', t: '屏幕截图' },
]
const colors = ['c-wire', 'c-solid', 'c-surf', 'c-mesh', 'metal']

const groups = [
  {
    name: '删除',
    cls: 'g-del',
    big: [{ i: 'del', t: '删除图素' }],
    cols: [[
      { i: 'del1', t: '非关联图形' },
      { i: 'del2', t: '重复图形', c: true },
      { i: 'del3', t: '恢复图素', off: true },
    ]],
  },
  {
    name: '显示',
    cls: 'g-show',
    launcher: true,
    big: [{ i: 'hide', t: '隐藏/取消隐藏', c: true }],
    cols: [[
      { i: 'center', t: '圆心点' },
      { i: 'ends', t: '端点' },
      { i: 'blank', t: '消隐', c: true },
    ]],
  },
  {
    name: '分析',
    cls: 'g-analyze',
    big: [],
    cols: [
      [{ i: 'an1', t: '图素分析' }, { i: 'an2', t: '距离分析', c: true }, { i: 'an3', t: '刀路分析' }],
      [{ i: 'an4', t: '动态分析', c: true }, { i: 'an5', t: '角度分析', c: true }, { i: 'an6', t: '串连分析', c: true }],
      [{ i: 'an7', t: '实体检查', c: true }, { i: 'an8', t: '2D 区域', c: true }, { i: 'an9', t: '统计' }],
    ],
  },
  {
    name: '加载项',
    cls: 'g-addin',
    launcher: true,
    big: [
      { i: 'gears', t: '运行加载项', c: true },
      { i: 'csharp', t: '网络脚本编辑器' },
      { i: 'find', t: '命令查找' },
    ],
    cols: [],
  },
]

const panelRows = [
  ['p1', 'p2', '|', 'p3', 'p4', 'p5', 'tri', '|', 'p6', 'p7', 'tri', 'p8', 'p9', 'p10', '|', 'p11', '|', 'help'],
  ['r1', 'r2', 'r3', '|', 'r4', 'r5', 'r6', 'r7', '|', 'r8', 'r9', 'r10', '|', 'r11', 'r12'],
]
const panelTabs = ['刀路', '实体', '平面', '层别', '最近使用功能']

const selbar = [
  's-lock', 's-sel-text', 'tri', 's-xyz', 's-gear', '|', 's-arrow', 's-cubecheck', 's-cubebar', 's-cube', 's-cube',
  's-cubecolor', 's-sel', 'tri', 's-area', 'tri', 's-clock', 's-task', 's-cycle', 's-back',
]
const masks = ['m1', 'm2', 'm3', 'm4', 'm5', 'm6', 'm7', 'm8', 'm9', 'm10', 'm11', 'm12', 'm13', 'm14', 'gear', 'm16']

const planes = ['绘图平面: 俯视图', '刀具平面: 俯视图', 'WCS: 俯视图']
const shades = ['globe', 'globe2', 'globe3', 'ball', 'ball', 'ball2']
</script>

<style>
body {
  margin: 0;
}
</style>

<style scoped>
.app {
  display: flex;
  flex-direction: column;
  height: 100vh;
  overflow: hidden;
  background: #fff;
  color: #444;
  font-family: 'Noto Sans', 'Noto Sans CJK SC', sans-serif;
  font-size: 12px;
  line-height: 16px;
}

.app * {
  box-sizing: border-box;
}

.sprite {
  position: absolute;
}

button,
select {
  font: inherit;
  color: inherit;
  background: none;
  border: none;
  padding: 0;
  margin: 0;
  white-space: nowrap;
}

svg {
  display: block;
  flex: none;
}

.i16 { width: 16px; height: 16px; }
.i18 { width: 16px; height: 18px; }
.i10 { width: 10px; height: 10px; }
.i8 { width: 8px; height: 8px; }
.i7 { width: 7px; height: 5px; }
.i-big { width: 30px; height: 33px; }

.ib {
  display: flex;
  align-items: center;
  flex: none;
}

.sep {
  width: 1px;
  height: 20px;
  margin-right: 1px;
  background: #c8c8c8;
}

/* title bar */
.titlebar {
  display: flex;
  align-items: center;
  height: 34px;
  flex: none;
}

.quick {
  display: flex;
  align-items: center;
  gap: 8px;
  padding: 0 0 8px 8px;
}

.quick .sep {
  margin: 0 -1px;
}

.quick .chev {
  margin-left: -4px;
}

h1 {
  flex: 1;
  margin: 0;
  font-size: 12px;
  font-weight: 400;
  text-align: center;
  color: #aaa;
}

.winbtns {
  display: flex;
  gap: 26px;
  padding-right: 2px;
}

/* tabs */
.tabs {
  display: flex;
  align-items: stretch;
  height: 28px;
  flex: none;
  border-bottom: 1px solid #d2d2d2;
}

.file {
  width: 52px;
  margin-right: 3px;
  background: #2b579a;
  color: #fff;
}

.tab {
  padding: 0 14px;
}

.tab.on {
  position: relative;
  padding: 0 13px 2px;
  margin-bottom: -1px;
  border: 1px solid #d2d2d2;
  border-bottom: none;
  background: #fff;
  color: #111;
}

.tabs-right {
  display: flex;
  align-items: center;
  margin-left: auto;
  padding: 0 10px 4px 0;
}

.tabs-right .ib {
  margin-left: 8px;
}

.my {
  margin: 2px 6px 0 4px;
  color: #666;
  text-decoration: none;
}

.combo {
  position: relative;
  display: flex;
  height: 21px;
}

.combo select {
  appearance: none;
  width: 100%;
  padding: 0 14px 0 3px;
  border: 1px solid #ababab;
  border-radius: 0;
  background: #fff;
  color: #222;
}

.combo .i7 {
  position: absolute;
  right: 4px;
  top: 8px;
  color: #666;
}

.combo .over {
  position: absolute;
  left: 6px;
  top: 5px;
  width: 10px;
  height: 10px;
}

.combo .over.wide {
  left: 2px;
  width: 38px;
}

.style-combo {
  width: 100px;
}

/* ribbon */
.ribbon {
  display: flex;
  height: 99px;
  flex: none;
  padding: 2px 0 3px;
  border-bottom: 1px solid #ccd0d4;
}

.group {
  position: relative;
  display: flex;
  flex-direction: column;
  flex: none;
  border-right: 1px solid #d6d6d6;
}

.group footer {
  margin-top: auto;
  padding-bottom: 1px;
  text-align: center;
}

.has-launcher footer {
  padding-right: 14px;
}

.body {
  display: flex;
  align-items: flex-start;
  gap: 6px;
  padding: 2px 8px 0;
}

.body.attr {
  flex-direction: column;
  gap: 9px;
  padding: 11px 7px 0;
}

.g-clip { width: 124px; }
.g-attr { width: 258px; }
.g-plan { width: 110px; }
.g-del { width: 150px; }
.g-show { width: 154px; }
.g-analyze { width: 260px; }
.g-addin { width: 218px; }

.g-clip .body { gap: 9px; padding-left: 9px; }
.g-analyze .body { padding-left: 9px; }
.g-addin .body { gap: 5px; }

.col {
  display: flex;
  flex-direction: column;
  align-items: flex-start;
}

.small {
  display: flex;
  align-items: center;
  gap: 3px;
  height: 22px;
}

.small:disabled {
  color: #aaa;
}

.big {
  display: flex;
  flex-direction: column;
  align-items: center;
  gap: 2px;
  padding-top: 3px;
}

.launcher {
  position: absolute;
  right: 5px;
  bottom: 5px;
}

.line {
  display: flex;
  align-items: center;
  height: 21px;
}

.c-point { width: 37px; }
.c-line { width: 57px; margin-left: -1px; }
.c-num { width: 75px; }
.threed { margin-left: 4px; }

.swatches {
  gap: 8px;
  padding-left: 4px;
}

.sw {
  gap: 4px;
}

.g-plan label {
  display: flex;
  justify-content: center;
  width: 22px;
  margin-right: 1px;
}

/* work area */
.work {
  display: flex;
  flex: 1;
  min-height: 0;
}

.panel {
  display: flex;
  flex-direction: column;
  width: 362px;
  margin-right: 5px;
  flex: none;
}

.panel-head {
  display: flex;
  align-items: center;
  gap: 9px;
  height: 36px;
  padding-right: 4px;
}

h2 {
  flex: 1;
  margin: 0;
  font-size: 20px;
  line-height: 24px;
  font-weight: 300;
}

.panel-tools {
  display: flex;
  align-items: center;
  gap: 6px;
  height: 24px;
}

.panel-tools .ib {
  opacity: .55;
}

.panel-tools .boxed {
  gap: 4px;
  height: 20px;
  padding: 0 1px;
  border: 1px solid #c4c4c4;
}

.tree {
  flex: 1;
  margin-top: 6px;
  border: 1px solid #c9c9c9;
  border-left: none;
}

.panel-tabs {
  display: flex;
  height: 22px;
  margin: 22px 0 1px;
  border-top: 1px solid #e2e2e2;
}

.panel-tabs button {
  padding: 0 7px 1px 6px;
}

.panel-tabs .on {
  padding: 0 5px 0 1px;
  margin-right: 1px;
  border: 1px solid #999;
  border-width: 0 1px 1px 0;
}

.view {
  display: flex;
  flex-direction: column;
  flex: 1;
  min-width: 0;
  border-left: 3px solid #f3f3f3;
}

.canvas {
  position: relative;
  flex: 1;
  overflow: hidden;
  background: linear-gradient(#929ca7, #fefefe);
}

.selbar {
  position: absolute;
  left: 258px;
  top: 6px;
  display: flex;
  align-items: center;
  gap: 6px;
  height: 34px;
  padding: 0 22px 0 20px;
  border-radius: 17px;
  background: rgba(255, 255, 255, .28);
}

.selbar .ib svg {
  opacity: .6;
}

.selbar .drop {
  margin: 0 1px;
}

.selbar .pick {
  gap: 2px;
  color: #666d74;
}

.bar-sep {
  width: 1px;
  height: 34px;
  margin: 0 -3px;
  background: #98a3ad;
}

.selbar .active {
  height: 34px;
  padding: 0 2px;
  margin: 0 -2px;
  border: 1px solid #7fa6c0;
  background: #a7bccb;
}

.masks {
  position: absolute;
  top: 66px;
  right: -5px;
  display: flex;
  flex-direction: column;
  gap: 6px;
}

.mask {
  position: relative;
  display: flex;
  align-items: center;
  justify-content: center;
  width: 35px;
  height: 35px;
  border: 1px solid rgba(160, 165, 170, .5);
  border-radius: 50%;
  background: rgba(240, 240, 240, .35);
}

.mask svg {
  opacity: .5;
}

.mask .slash {
  position: absolute;
  inset: -1px;
  width: 35px;
  height: 35px;
  opacity: .35;
}

.gnomon {
  position: absolute;
  left: 6px;
  bottom: 6px;
}

.gnomon-top {
  display: flex;
  align-items: flex-end;
  gap: 13px;
}

.cube {
  width: 90px;
  height: 94px;
}

.gnomon-bottom {
  display: flex;
  align-items: center;
  gap: 6px;
  margin-top: 6px;
}

.gnomon-bottom strong {
  margin: -3px 0 0 5px;
  font-size: 13px;
  color: #000;
}

.pill {
  display: flex;
  width: 18px;
  height: 18px;
  border: 1px solid #999;
  border-radius: 9px;
  background: #e6e6e6;
}

.pill svg {
  width: 100%;
  height: 100%;
}

.pill.tall { height: 48px; }
.pill.long { width: 48px; }

.scale {
  position: absolute;
  right: 12px;
  bottom: 11px;
  display: flex;
  flex-direction: column;
  min-width: 97px;
  border: 1px solid #000;
  border-width: 0 1px;
  font-family: 'DejaVu Sans', 'Noto Sans CJK SC', sans-serif;
  font-weight: 700;
  line-height: 12px;
  text-align: center;
  color: #000;
}

.scale span + span {
  padding-top: 1px;
  border-top: 1px solid #000;
}

.sheets {
  display: flex;
  align-items: flex-start;
  height: 27px;
  border-top: 1px solid #999;
}

.sheet {
  height: 25px;
  padding: 3px 5px 0 6px;
  border: 1px solid #999;
  border-top: none;
  color: #111;
}

.sheets .plus {
  flex: 1;
  height: 24px;
  margin-top: 3px;
  padding: 0 0 4px 8px;
  border-top: 1px solid #999;
  font-size: 13px;
  text-align: left;
}

.sheets .prev {
  height: 24px;
  margin-top: 3px;
  padding: 0 12px 1px 0;
  border-top: 1px solid #999;
}

.stub {
  width: 1px;
  height: 8px;
  margin-top: 12px;
  background: #777;
}

/* status bar */
.status {
  display: flex;
  align-items: center;
  justify-content: flex-end;
  gap: 8px;
  height: 24px;
  flex: none;
  padding: 1px 9px 0 0;
  background: #2b579a;
  color: #fff;
}

.status .i7 {
  color: #7f9cc6;
}

.picked {
  margin: 0 64px 0 9px;
}

.coord {
  display: flex;
  gap: 11px;
  margin-right: 12px;
}

.coord.y {
  margin-right: 18px;
}

.coord.z {
  margin-right: 0;
}

.coord b {
  font-weight: 400;
}

.status .mode {
  margin: 0 6px 0 4px;
}

.shades {
  display: flex;
  gap: 2px;
  height: 100%;
}

.status .shades button {
  display: flex;
  align-items: center;
  padding: 0 5px;
}

.shades .on {
  background: #0f62c8;
}
</style>
